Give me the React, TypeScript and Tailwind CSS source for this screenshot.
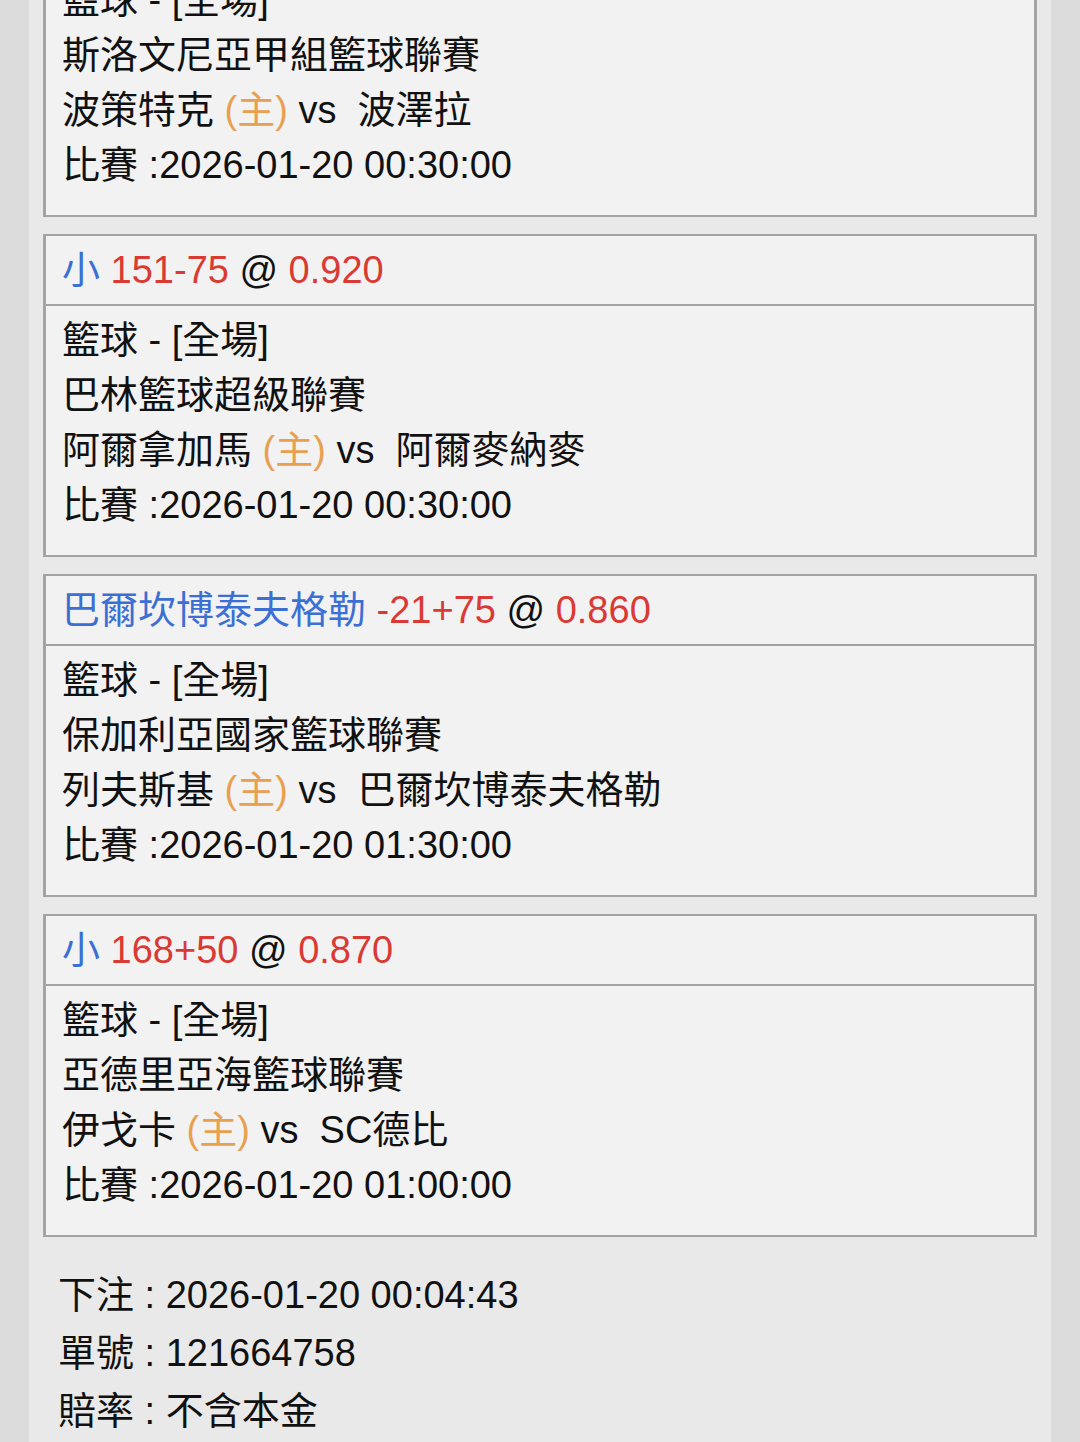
const bets = [
  {
    pick: "大",
    line: "151-75",
    odds: "0.910",
    league: "斯洛文尼亞甲組籃球聯賽",
    home: "波策特克",
    away: "波澤拉",
    time: "2026-01-20 00:30:00",
  },
  {
    pick: "小",
    line: "151-75",
    odds: "0.920",
    league: "巴林籃球超級聯賽",
    home: "阿爾拿加馬",
    away: "阿爾麥納麥",
    time: "2026-01-20 00:30:00",
  },
  {
    pick: "巴爾坎博泰夫格勒",
    line: "-21+75",
    odds: "0.860",
    league: "保加利亞國家籃球聯賽",
    home: "列夫斯基",
    away: "巴爾坎博泰夫格勒",
    time: "2026-01-20 01:30:00",
  },
  {
    pick: "小",
    line: "168+50",
    odds: "0.870",
    league: "亞德里亞海籃球聯賽",
    home: "伊戈卡",
    away: "SC德比",
    time: "2026-01-20 01:00:00",
  },
];

function BetCard({ bet }: { bet: (typeof bets)[number] }) {
  return (
    <div className="bg-[#f2f2f2] border-x-[3px] border-y-2 border-[#a3a3a3] h-[323px] shrink-0 flex flex-col">
      <div className="h-[70px] px-[16px] pt-[7px] leading-[55px] whitespace-pre border-b-2 border-[#a3a3a3]">
        <span className="text-[#3b6fd4]">{bet.pick}</span>{" "}
        <span className="text-[#d93a33]">{bet.line}</span>{" "}
        <span>@</span>{" "}
        <span className="text-[#d93a33]">{bet.odds}</span>
      </div>
      <div className="px-[16px] pt-[7px] leading-[55px] whitespace-pre">
        <div>籃球 - [全場]</div>
        <div>{bet.league}</div>
        <div>
          {bet.home} <span className="text-[#e8a050]">(主)</span> vs  {bet.away}
        </div>
        <div>比賽 :{bet.time}</div>
      </div>
    </div>
  );
}

export default function App() {
  return (
    <div
      className="w-[1080px] h-[1442px] overflow-hidden bg-[#dcdcdc] text-[#111] text-[38px]"
      style={{ fontFamily: "'Liberation Sans', 'Noto Sans CJK TC', sans-serif" }}
    >
      <div className="ml-[29px] w-[1022px] h-full bg-[#e9e9e9] px-[14px] flex flex-col">
        <div className="-mt-[106px] flex flex-col gap-[17px]">
          {bets.map((b, i) => (
            <BetCard key={i} bet={b} />
          ))}
        </div>
        <div className="mt-[29px] px-[15px] leading-[58px] whitespace-pre">
          <div>下注 : 2026-01-20 00:04:43</div>
          <div>單號 : 121664758</div>
          <div>賠率 : 不含本金</div>
        </div>
      </div>
    </div>
  );
}
